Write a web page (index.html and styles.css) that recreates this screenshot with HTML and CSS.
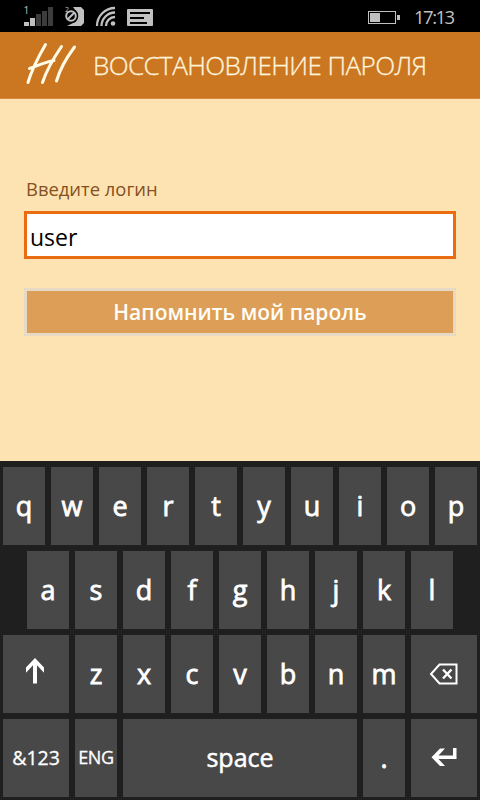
FILE: index.html
```html
<!DOCTYPE html>
<html lang="ru">
<head>
<meta charset="utf-8">
<title>Восстановление пароля</title>
<link rel="stylesheet" href="styles.css">
</head>
<body>
<div class="status">
  <svg class="status-icons" width="160" height="32" viewBox="0 0 160 32">
    <text x="23.500" y="14" class="sim">1</text>
    <path fill="#c0c0c0" d="M24 22h5v4h-5zM30 18h5v8h-5z"/>
    <path fill="#3c3c3c" d="M36 14h5v12h-5zM42 11h5v15h-5zM48 7h5v19h-5z"/>
    <path fill="#c0c0c0" d="M73 7h8l3 3v13l-3 3H67l8-4 3-8z"/>
    <circle cx="71" cy="16" r="7.3" fill="#000"/>
    <circle cx="71" cy="16" r="4.8" fill="none" stroke="#c0c0c0" stroke-width="2"/>
    <path d="M67.500 19.500l7-7" stroke="#c0c0c0" stroke-width="2"/>
    <text x="65" y="11.500" class="sim small">2</text>
    <g fill="none" stroke="#c0c0c0" stroke-width="2.300">
      <path d="M97 26A18 18 0 0 1 115 8M101.500 26A13.500 13.500 0 0 1 115 12.500M106 26A9 9 0 0 1 115 17"/>
    </g>
    <circle cx="113" cy="23.500" r="2.300" fill="#c0c0c0"/>
    <rect x="127" y="9" width="26" height="17" rx="1" fill="#c0c0c0"/>
    <path d="M130 13h20M130 18h14M130 23h17" stroke="#000" stroke-width="2"/>
  </svg>
  <svg class="battery" width="34" height="14" viewBox="0 0 34 14">
    <rect x=".5" y=".5" width="27" height="12" fill="none" stroke="#c0c0c0"/>
    <path fill="#c0c0c0" d="M2 2h10v9H2zM29 4h3v5h-3z"/>
  </svg>
  <span class="clock">17:13</span>
</div>
<header class="header">
  <svg class="logo" width="54" height="46" viewBox="0 0 54 46" fill="none" stroke="#fffbe6" stroke-width="3" stroke-linecap="round" stroke-linejoin="round">
    <path d="M22.500 2.500C17 12 9 27 5 40.500M38.500 4.500C32 14 24 27 19.500 40.500M6.500 26.500C14 24 22 20 31 18.500M51.500 5C44 15 37 27 33.500 39"/>
  </svg>
  <h1 class="title">ВОССТАНОВЛЕНИЕ ПАРОЛЯ</h1>
</header>
<main class="form">
  <label class="label" for="login">Введите логин</label>
  <input class="input" id="login" type="text" value="user">
  <button class="button" type="button"><span>Напомнить мой пароль</span></button>
</main>
<div class="keyboard">
  <div class="row"><div class="key">q</div><div class="key">w</div><div class="key">e</div><div class="key">r</div><div class="key">t</div><div class="key">y</div><div class="key">u</div><div class="key">i</div><div class="key">o</div><div class="key">p</div></div>
  <div class="row"><div class="key">a</div><div class="key">s</div><div class="key">d</div><div class="key">f</div><div class="key">g</div><div class="key">h</div><div class="key">j</div><div class="key">k</div><div class="key">l</div></div>
  <div class="row">
    <div class="key wide"><svg class="shift" width="20" height="26" viewBox="0 0 20 26" fill="#fff"><path d="M10 0L19 9.500v5.300l-7-7.500V25.500H8V7.300L1 14.800V9.500z"/></svg></div>
    <div class="key">z</div><div class="key">x</div><div class="key">c</div><div class="key">v</div><div class="key">b</div><div class="key">n</div><div class="key">m</div>
    <div class="key wide"><svg class="erase" width="30" height="22" viewBox="0 0 30 22" fill="none" stroke="#fff"><path d="M10.500 1.500h17v19h-17L2 11z" stroke-width="2"/><path d="M14 6.500l8.500 9M22.500 6.500L14 15.500" stroke-width="2.400"/></svg></div>
  </div>
  <div class="row">
    <div class="key wide symbols">&amp;123</div><div class="key lang">ENG</div><div class="key space">space</div><div class="key">.</div>
    <div class="key wide"><svg class="enter" width="26" height="20" viewBox="0 0 26 20" fill="#fff"><path d="M22 1h3.500v11H7.500l6.500 7H9L.5 10.300 9 1.500h5L7.500 8.500H22z"/></svg></div>
  </div>
</div>
</body>
</html>
```
FILE: styles.css
```css
* { box-sizing: border-box; }
body {
  margin: 0;
  width: 480px;
  height: 800px;
  overflow: hidden;
  display: flex;
  flex-direction: column;
  background: #fee3b2;
  font-family: "Open Sans", "Noto Sans", sans-serif;
}
.status {
  height: 32px;
  flex: none;
  display: flex;
  background: #000;
  color: #c0c0c0;
}
.sim { font-size: 10px; fill: #c0c0c0; }
.small { font-size: 7px; }
.battery { margin: 11px 0 0 208px; }
.clock {
  margin-left: 12px;
  font-size: 18.500px;
  line-height: 34px;
  letter-spacing: -1.500px;
}
.header {
  height: 67px;
  flex: none;
  display: flex;
  background: #cb7722;
  border-bottom: 1px solid #d88b3e;
}
.logo { margin: 10px 0 0 23px; }
.title {
  margin: 0 0 0 16px;
  font-size: 26px;
  font-weight: 300;
  line-height: 66px;
  letter-spacing: -0.580px;
  white-space: nowrap;
  color: #fff4dc;
  -webkit-text-stroke: 0.3px #fff4dc;
}
.form {
  height: 362px;
  flex: none;
  padding: 76px 24px 0;
  display: flex;
  flex-direction: column;
}
.label {
  height: 36px;
  padding-left: 2px;
  font-size: 18.400px;
  line-height: 28px;
  color: #85501f;
}
.input {
  width: 100%;
  height: 48px;
  padding: 3px 3px 0;
  border: 3px solid #ea6c10;
  border-radius: 0;
  outline: 0;
  background: #fff;
  color: #000;
  font: 23px "Open Sans", "Noto Sans", sans-serif;
}
.button {
  width: 100%;
  height: 48px;
  margin-top: 29px;
  padding: 0;
  border: 3px solid #e6dac5;
  background: #dd9e57;
  color: #fffdf7;
  font: 600 21px "Open Sans", "Noto Sans", sans-serif;
}
.keyboard {
  flex: 1;
  padding: 6px 3px 3px;
  display: flex;
  flex-direction: column;
  gap: 6px;
  background: #1f1f1f;
  color: #fff;
}
.row {
  height: 78px;
  display: flex;
  justify-content: center;
  gap: 6px;
}
.key {
  width: 42px;
  padding-bottom: 2px;
  display: flex;
  align-items: center;
  justify-content: center;
  background: #484848;
  font-size: 27px;
  -webkit-text-stroke: 0.8px #fff;
}
.wide { width: 66px; }
.space { width: 234px; font-size: 25px; -webkit-text-stroke-width: 0.5px; }
.symbols { font-size: 19.500px; -webkit-text-stroke-width: 0.3px; }
.lang { font-size: 18px; letter-spacing: -0.300px; -webkit-text-stroke-width: 0.3px; }
.shift { margin: -4px 2px 0 0; }
.erase { margin-top: 2px; }
```
